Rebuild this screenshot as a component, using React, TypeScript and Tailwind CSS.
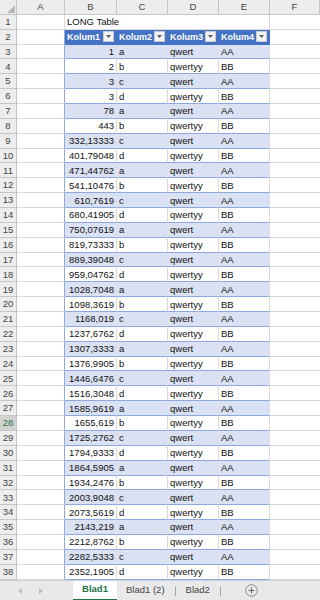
import React from 'react';

const nums = [
  '1', '2', '3', '3', '78', '443', '332,13333', '401,79048', '471,44762', '541,10476',
  '610,7619', '680,41905', '750,07619', '819,73333', '889,39048', '959,04762', '1028,7048',
  '1098,3619', '1168,019', '1237,6762', '1307,3333', '1376,9905', '1446,6476', '1516,3048',
  '1585,9619', '1655,619', '1725,2762', '1794,9333', '1864,5905', '1934,2476', '2003,9048',
  '2073,5619', '2143,219', '2212,8762', '2282,5333', '2352,1905',
];
const letters = ['a', 'b', 'c', 'd'];

function Filter() {
  return (
    <span className="ml-auto mr-[2px] flex h-[11px] w-[11px] shrink-0 items-center justify-center border border-[#c8c8c8] bg-[#f3f3f3]">
      <svg width="5" height="3" viewBox="0 0 5 3">
        <path d="M0 0h5L2.5 3z" fill="#595959" />
      </svg>
    </span>
  );
}

function RowHead({ n }: { n: number }) {
  const active = n === 28;
  return (
    <div
      className={`flex h-full w-[17px] shrink-0 items-center justify-center border-r border-b border-[#c6c6c6] ${
        active ? 'bg-[#d2d2d2] text-[#217346]' : 'bg-[#ededed] text-[#444]'
      }`}
    >
      {n}
    </div>
  );
}

function SheetRow({ n }: { n: number }) {
  const i = n - 3;
  const inTable = n >= 2;
  const band = n >= 3 && n % 2 === 1;
  const isHead = n === 2;

  const tableCell = isHead
    ? 'bg-[#4472c4] text-white font-bold border-b border-[#4472c4] border-r border-r-[#4472c4]'
    : band
      ? 'bg-[#d9e1f2] border-b border-[#8ea9db] border-r border-r-[#d9e1f2]'
      : 'bg-white border-b border-[#8ea9db] border-r border-r-[#dadada]';

  return (
    <div className="flex h-[14.86px] text-[9.5px] leading-none text-[#111]">
      <RowHead n={n} />
      <div
        className={`h-full w-[48px] shrink-0 border-b border-[#dadada] border-r ${
          inTable ? 'border-r-[#8ea9db]' : 'border-r-[#dadada]'
        }`}
      />
      {n === 1 && (
        <div className="flex h-full w-[205px] shrink-0 items-end border-r border-b border-[#dadada] pb-[2px] pl-[2px]">
          LONG Table
        </div>
      )}
      {isHead &&
        ['Kolum1', 'Kolum2', 'Kolum3', 'Kolum4'].map((k, j) => (
          <div
            key={k}
            className={`flex h-full ${j === 0 ? 'w-[52px]' : 'w-[51px]'} shrink-0 items-center pl-[2px] ${tableCell} ${
              j === 3 ? 'border-r-[#8ea9db]' : ''
            }`}
          >
            <span className="pt-[1px] text-[9px]">{k}</span>
            <Filter />
          </div>
        ))}
      {n >= 3 && (
        <>
          <div className={`flex h-full w-[52px] shrink-0 items-end justify-end pr-[2px] pb-[2px] ${tableCell}`}>
            {nums[i]}
          </div>
          <div className={`flex h-full w-[51px] shrink-0 items-end pl-[2px] pb-[2px] ${tableCell}`}>
            {letters[i % 4]}
          </div>
          <div className={`flex h-full w-[51px] shrink-0 items-end pl-[2px] pb-[2px] ${tableCell}`}>
            {n % 2 === 1 ? 'qwert' : 'qwertyy'}
          </div>
          <div className={`flex h-full w-[51px] shrink-0 items-end pl-[2px] pb-[2px] ${tableCell} border-r-[#8ea9db]`}>
            {n % 2 === 1 ? 'AA' : 'BB'}
          </div>
        </>
      )}
      <div className="h-full flex-1 border-b border-[#dadada]" />
    </div>
  );
}

export default function App() {
  const rows = Array.from({ length: 38 }, (_, k) => k + 1);
  return (
    <div className="h-[600px] w-[320px] overflow-hidden bg-white font-['Liberation_Sans',Arial,sans-serif]">
      <div className="flex h-[14.86px] text-[9.5px] leading-none text-[#444]">
        <div className="relative h-full w-[17px] shrink-0 border-r border-b border-[#c6c6c6] bg-[#ededed]">
          <svg className="absolute right-[1px] bottom-[1px]" width="8" height="8" viewBox="0 0 8 8">
            <path d="M8 0v8H0z" fill="#b7b7b7" />
          </svg>
        </div>
        {['A', 'B', 'C', 'D', 'E', 'F'].map((c, j) => (
          <div
            key={c}
            className={`flex h-full shrink-0 items-center justify-center border-r border-b border-[#c6c6c6] bg-[#ededed] ${
              ['w-[48px]', 'w-[52px]', 'w-[51px]', 'w-[51px]', 'w-[51px]', 'w-[50px]'][j]
            }`}
          >
            {c}
          </div>
        ))}
      </div>
      {rows.map((n) => (
        <SheetRow key={n} n={n} />
      ))}
      <div className="flex h-[21px] items-stretch border-t border-[#d0d0d0] bg-[#e9e9e9] text-[9.5px] text-[#444]">
        <div className="flex w-[73px] shrink-0 items-center">
          <svg className="ml-[18px]" width="4" height="6" viewBox="0 0 4 6">
            <path d="M4 0v6L0 3z" fill="#bdbdbd" />
          </svg>
          <svg className="ml-[17px]" width="4" height="6" viewBox="0 0 4 6">
            <path d="M0 0v6l4-3z" fill="#bdbdbd" />
          </svg>
        </div>
        <div className="flex w-[44px] shrink-0 items-center justify-center border-b-2 border-[#217346] bg-white font-bold text-[#217346]">
          Blad1
        </div>
        <div className="flex items-center pl-[9px]">Blad1 (2)</div>
        <div className="mx-[10px] my-[5px] w-px bg-[#a6a6a6]" />
        <div className="flex items-center">Blad2</div>
        <div className="mx-[10px] my-[5px] w-px bg-[#a6a6a6]" />
        <div className="ml-[14px] flex items-center">
          <svg width="13" height="13" viewBox="0 0 13 13">
            <circle cx="6.5" cy="6.5" r="5.8" fill="none" stroke="#8a8a8a" strokeWidth="1" />
            <path d="M6.5 3.5v6M3.5 6.5h6" stroke="#6a6a6a" strokeWidth="1" />
          </svg>
        </div>
      </div>
    </div>
  );
}
